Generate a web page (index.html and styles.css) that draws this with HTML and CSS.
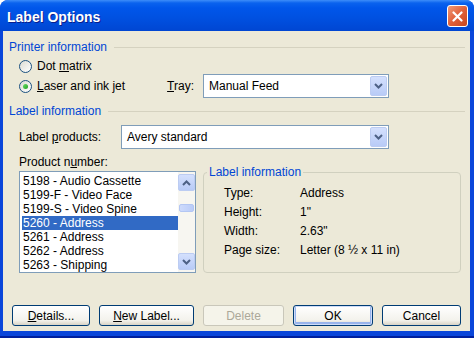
FILE: index.html
```html
<!DOCTYPE html>
<html lang="en">

<head>
    <meta charset="UTF-8">
    <title>Label Options</title>
    <link rel="stylesheet" href="styles.css">
</head>

<body>
    <div class="window">
        <div class="titlebar">
            <span class="title">Label Options</span>
            <span class="close">
                <svg width="11" height="11" viewBox="0 0 11 11">
                    <path d="M1.5 1.5 L9.5 9.5 M9.5 1.5 L1.5 9.5" stroke="#fff" stroke-width="2.2" stroke-linecap="round" />
                </svg>
            </span>
        </div>
        <div class="client">
            <div class="group-head">Printer information</div>
            <div class="radio-row first">
                <span class="radio"></span>
                <span>Dot <u>m</u>atrix</span>
            </div>
            <div class="radio-row">
                <span class="radio checked"></span>
                <span><u>L</u>aser and ink jet</span>
                <span class="tray-label"><u>T</u>ray:</span>
                <div class="combo tray">
                    <span class="combo-text">Manual Feed</span>
                    <span class="combo-btn">
                        <svg width="9" height="6" viewBox="0 0 9 6">
                            <path d="M1 1 L4.5 4.5 L8 1" fill="none" stroke="#4D6185" stroke-width="2" />
                        </svg>
                    </span>
                </div>
            </div>
            <div class="group-head second">Label information</div>
            <div class="field-row">
                <span class="field-label">Label <u>p</u>roducts:</span>
                <div class="combo products">
                    <span class="combo-text">Avery standard</span>
                    <span class="combo-btn">
                        <svg width="9" height="6" viewBox="0 0 9 6">
                            <path d="M1 1 L4.5 4.5 L8 1" fill="none" stroke="#4D6185" stroke-width="2" />
                        </svg>
                    </span>
                </div>
            </div>
            <div class="caption">Product n<u>u</u>mber:</div>
            <div class="lower">
                <div class="listbox">
                    <ul class="items">
                        <li>5198 - Audio Cassette</li>
                        <li>5199-F - Video Face</li>
                        <li>5199-S - Video Spine</li>
                        <li class="selected">5260 - Address</li>
                        <li>5261 - Address</li>
                        <li>5262 - Address</li>
                        <li>5263 - Shipping</li>
                    </ul>
                    <div class="scrollbar">
                        <span class="sb-btn">
                            <svg width="9" height="6" viewBox="0 0 9 6">
                                <path d="M1 5 L4.5 1.5 L8 5" fill="none" stroke="#4D6185" stroke-width="2" />
                            </svg>
                        </span>
                        <div class="sb-track"><span class="sb-thumb"></span></div>
                        <span class="sb-btn">
                            <svg width="9" height="6" viewBox="0 0 9 6">
                                <path d="M1 1 L4.5 4.5 L8 1" fill="none" stroke="#4D6185" stroke-width="2" />
                            </svg>
                        </span>
                    </div>
                </div>
                <fieldset class="info">
                    <legend>Label information</legend>
                    <div class="info-row"><span class="info-key">Type:</span><span>Address</span></div>
                    <div class="info-row"><span class="info-key">Height:</span><span>1"</span></div>
                    <div class="info-row"><span class="info-key">Width:</span><span>2.63"</span></div>
                    <div class="info-row"><span class="info-key">Page size:</span><span>Letter (8 &frac12; x 11 in)</span></div>
                </fieldset>
            </div>
            <div class="buttons">
                <button class="btn details"><u>D</u>etails...</button>
                <button class="btn new-label"><u>N</u>ew Label...</button>
                <button class="btn delete" disabled>Delete</button>
                <button class="btn ok">OK</button>
                <button class="btn cancel">Cancel</button>
            </div>
        </div>
    </div>
</body>

</html>
```

FILE: styles.css
```css
* {
    margin: 0;
    padding: 0;
    box-sizing: border-box;
}

html,
body {
    background: #fff;
}

body {
    font: 12px "Liberation Sans", Arial, sans-serif;
    color: #000;
}

u {
    text-underline-offset: 1px;
}

.window {
    width: 474px;
    height: 338px;
    display: flex;
    flex-direction: column;
    background: #0A46DA;
    border-bottom: 2px solid #00209E;
    border-radius: 8px 8px 0 0;
    overflow: hidden;
}

/* title bar */
.titlebar {
    height: 31px;
    flex: none;
    display: flex;
    align-items: flex-start;
    justify-content: space-between;
    padding: 0 6px 0 7px;
    background: linear-gradient(#3D8DF9 0, #0A62EE 3px, #0056EA 8px, #0050E0 60%, #0046D2 100%);
}

.title {
    margin-top: 9px;
    font-size: 14px;
    font-weight: bold;
    line-height: 16px;
    color: #fff;
    text-shadow: 1px 1px 0 #0A1E8C;
}

.close {
    width: 21px;
    height: 22px;
    margin-top: 5px;
    display: flex;
    align-items: center;
    justify-content: center;
    border: 1px solid #fff;
    border-radius: 3px;
    background: linear-gradient(135deg, #F09A78, #E0603A 50%, #C8461E);
}

/* client area */
.client {
    flex: 1;
    margin: 0 4px 5px 3px;
    padding-top: 9px;
    display: flex;
    flex-direction: column;
    background: #ECE9D8;
}

.group-head {
    display: flex;
    align-items: center;
    height: 14px;
    padding: 0 5px 0 6px;
    color: #0046D5;
}

.group-head::after {
    content: "";
    flex: 1;
    height: 1px;
    margin-left: 7px;
    background: #D5D2C0;
}

.group-head.second {
    margin-top: 8px;
}

.radio-row {
    display: flex;
    align-items: center;
    height: 20px;
    padding-left: 16px;
}

.radio-row.first {
    margin-top: 2px;
}

.radio {
    width: 13px;
    height: 13px;
    margin-right: 5px;
    display: flex;
    align-items: center;
    justify-content: center;
    border: 1px solid #1C5180;
    border-radius: 50%;
    background: linear-gradient(135deg, #DCDBD2, #fff);
}

.radio.checked::after {
    content: "";
    width: 5px;
    height: 5px;
    border-radius: 50%;
    background: linear-gradient(135deg, #6BDC67, #21A121);
}

.tray-label {
    margin-left: auto;
    margin-right: 9px;
}

/* combo boxes */
.combo {
    height: 24px;
    display: flex;
    align-items: center;
    border: 1px solid #7F9DB9;
    background: #fff;
}

.combo-text {
    flex: 1;
    padding-left: 5px;
}

.combo-btn,
.sb-btn {
    width: 17px;
    display: flex;
    align-items: center;
    justify-content: center;
    border: 1px solid #BCCCF2;
    border-radius: 2px;
    background: linear-gradient(#D4E0FD, #B8CBF7);
}

.combo-btn {
    height: 20px;
    margin-right: 1px;
}

.combo.tray {
    width: 186px;
    margin-right: 81px;
}

.field-row {
    display: flex;
    align-items: center;
    height: 24px;
    margin-top: 7px;
    padding-left: 16px;
}

.field-label {
    width: 102px;
}

.combo.products {
    width: 268px;
}

.caption {
    margin-top: 6px;
    line-height: 14px;
    padding-left: 16px;
}

/* product list and info box */
.lower {
    display: flex;
    align-items: flex-start;
    height: 102px;
    margin-top: 2px;
    padding-left: 16px;
}

.listbox {
    width: 177px;
    height: 102px;
    display: flex;
    border: 1px solid #7F9DB9;
    background: #fff;
}

.items {
    flex: 1;
    list-style: none;
    padding: 2px 0 0 2px;
    overflow: hidden;
}

.items li {
    height: 14px;
    line-height: 14px;
    padding-left: 1px;
    white-space: nowrap;
}

.items li.selected {
    background: #316AC5;
    color: #fff;
}

.scrollbar {
    width: 17px;
    display: flex;
    flex-direction: column;
    padding: 2px 0;
    background: #F7F6F1;
}

.sb-btn {
    height: 17px;
    flex: none;
}

.sb-track {
    flex: 1;
    padding: 13px 1px 0;
}

.sb-thumb {
    display: block;
    height: 8px;
    border: 1px solid #B3C6F3;
    border-radius: 2px;
    background: linear-gradient(90deg, #CDDAFC, #BACCF8);
}

.info {
    width: 258px;
    height: 108px;
    margin: -6px 0 0 7px;
    padding: 5px 0 0 20px;
    border: 1px solid #D0D0BF;
    border-radius: 4px;
}

.info legend {
    margin-left: -17px;
    padding: 0 2px;
    line-height: 14px;
    color: #0046D5;
}

.info-row {
    display: flex;
    height: 19px;
    line-height: 19px;
}

.info-key {
    width: 76px;
}

/* buttons */
.buttons {
    display: flex;
    justify-content: space-between;
    margin-top: 32px;
    padding: 0 9px;
}

.btn {
    height: 21px;
    font: inherit;
    color: #000;
    border: 1px solid #003C74;
    border-radius: 3px;
    background: linear-gradient(#FFFFFF, #F3F2EC 75%, #D8D3C6);
}

.details {
    width: 78px;
}

.new-label {
    width: 95px;
}

.delete {
    width: 81px;
    color: #ACA899;
    border-color: #C9C7BA;
    background: #F5F4EA;
}

.ok {
    width: 80px;
    box-shadow: inset 0 0 0 1px #CEDCF8, inset 0 -1px 0 2px #98B4EC;
}

.cancel {
    width: 79px;
}
```
